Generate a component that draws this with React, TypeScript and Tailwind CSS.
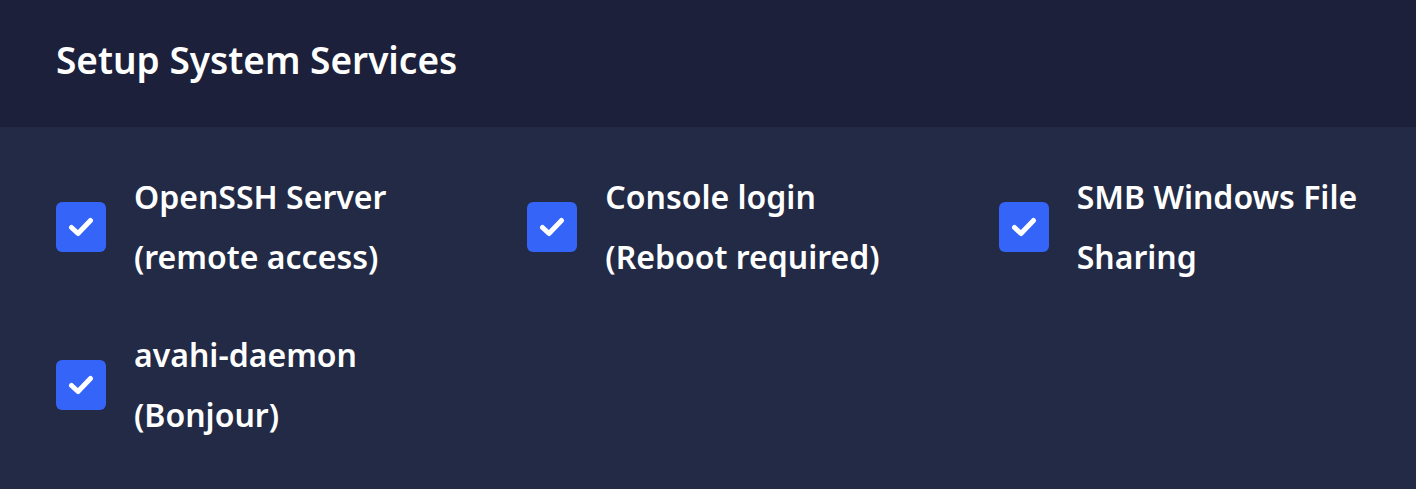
import React from 'react';

const services = [
  { lines: ['OpenSSH Server', '(remote access)'] },
  { lines: ['Console login', '(Reboot required)'] },
  { lines: ['SMB Windows File', 'Sharing'] },
  { lines: ['avahi-daemon', '(Bonjour)'] },
];

const CheckBox = () => (
  <div className="flex h-[50px] w-[50px] shrink-0 items-center justify-center rounded-[6px] bg-[#3465f8]">
    <svg width="26" height="20" viewBox="0 0 26 20" fill="none">
      <path d="M3.5 10.5l6.5 6L22.5 3.5" stroke="white" strokeWidth="5" strokeLinecap="round" strokeLinejoin="round" />
    </svg>
  </div>
);

export default function App() {
  return (
    <div className="h-[489px] w-full bg-[#222a45] font-['Noto_Sans',sans-serif] font-semibold text-white">
      <div className="flex h-[127px] items-center bg-[#1c203a] px-[56px] pb-[8px]">
        <h1 className="text-[37px] leading-none">Setup System Services</h1>
      </div>
      <div className="grid grid-cols-3 gap-x-[110px] gap-y-[38px] px-[56px] pt-[40px]">
        {services.map((s, i) => (
          <label key={i} className="flex items-center gap-[28px]">
            <CheckBox />
            <span className="text-[32px] leading-[60px]">
              {s.lines.map((l, j) => (
                <span key={j} className="block whitespace-nowrap">{l}</span>
              ))}
            </span>
          </label>
        ))}
      </div>
    </div>
  );
}
